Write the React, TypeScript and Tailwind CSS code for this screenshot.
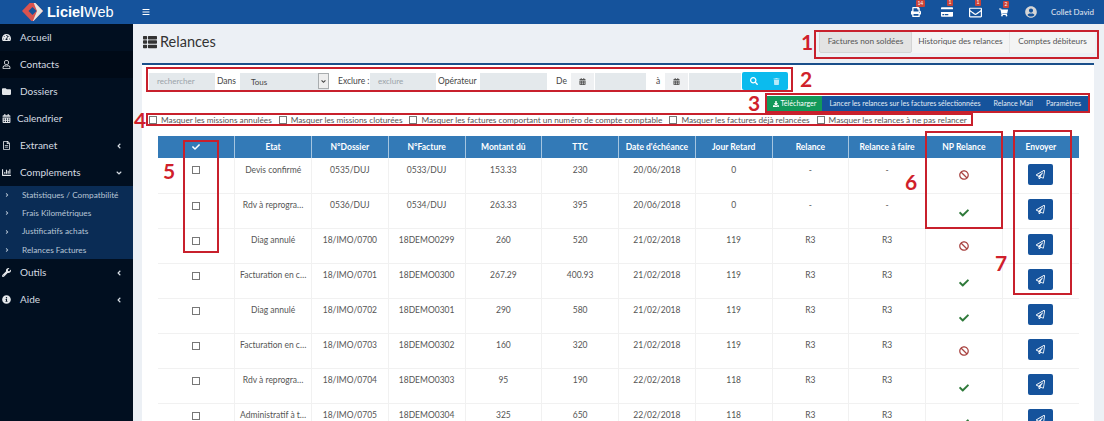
import React from "react";
import {
  FaAngleDown,
  FaAngleLeft,
  FaAngleRight,
  FaBan,
  FaBars,
  FaCalendarAlt,
  FaChartBar,
  FaCheck,
  FaCreditCard,
  FaDownload,
  FaFolder,
  FaInfoCircle,
  FaPrint,
  FaRegEnvelope,
  FaRegFileAlt,
  FaRegPaperPlane,
  FaRegUser,
  FaSearch,
  FaShoppingCart,
  FaTachometerAlt,
  FaThList,
  FaTrash,
  FaUserCircle,
  FaWrench,
} from "react-icons/fa";

const menuTop = [
  { icon: FaTachometerAlt, label: "Accueil" },
  { icon: FaRegUser, label: "Contacts", active: true },
  { icon: FaFolder, label: "Dossiers" },
  { icon: FaCalendarAlt, label: "Calendrier", tight: true },
  { icon: FaRegFileAlt, label: "Extranet", arrow: true },
];

const subMenu = ["Statistiques / Compatbilité", "Frais Kilométriques", "Justificatifs achats", "Relances Factures"];

const headers = ["Etat", "N°Dossier", "N°Facture", "Montant dû", "TTC", "Date d'échéance", "Jour Retard", "Relance", "Relance à faire", "NP Relance", "Envoyer"];

const rows = [
  { etat: "Devis confirmé", dossier: "0535/DUJ", facture: "0533/DUJ", montant: "153.33", ttc: "230", date: "20/06/2018", jour: "0", relance: "-", faire: "-", np: false },
  { etat: "Rdv à reprogra…", dossier: "0536/DUJ", facture: "0534/DUJ", montant: "263.33", ttc: "395", date: "20/06/2018", jour: "0", relance: "-", faire: "-", np: true },
  { etat: "Diag annulé", dossier: "18/IMO/0700", facture: "18DEMO0299", montant: "260", ttc: "520", date: "21/02/2018", jour: "119", relance: "R3", faire: "R3", np: false },
  { etat: "Facturation en c…", dossier: "18/IMO/0701", facture: "18DEMO0300", montant: "267.29", ttc: "400.93", date: "21/02/2018", jour: "119", relance: "R3", faire: "R3", np: true },
  { etat: "Diag annulé", dossier: "18/IMO/0702", facture: "18DEMO0301", montant: "290", ttc: "580", date: "21/02/2018", jour: "119", relance: "R3", faire: "R3", np: true },
  { etat: "Facturation en c…", dossier: "18/IMO/0703", facture: "18DEMO0302", montant: "160", ttc: "320", date: "21/02/2018", jour: "119", relance: "R3", faire: "R3", np: false },
  { etat: "Rdv à reprogra…", dossier: "18/IMO/0704", facture: "18DEMO0303", montant: "95", ttc: "190", date: "22/02/2018", jour: "118", relance: "R3", faire: "R3", np: true },
  { etat: "Administratif à t…", dossier: "18/IMO/0705", facture: "18DEMO0304", montant: "325", ttc: "650", date: "22/02/2018", jour: "118", relance: "R3", faire: "R3", np: true },
];

const filters = [
  "Masquer les missions annulées",
  "Masquer les missions cloturées",
  "Masquer les factures comportant un numéro de compte comptable",
  "Masquer les factures déjà relancées",
  "Masquer les relances à ne pas relancer",
];

const notes = [
  { n: "1", box: "left-[814px] top-[30px] w-[285px] h-[29px]", num: "left-[801px] top-[31px]" },
  { n: "2", box: "left-[146px] top-[67px] w-[647px] h-[25px]", num: "left-[800px] top-[68px]" },
  { n: "3", box: "left-[765px] top-[93px] w-[325px] h-[20px]", num: "left-[748px] top-[92px]" },
  { n: "4", box: "left-[146px] top-[113px] w-[827px] h-[13px]", num: "left-[134px] top-[109px]" },
  { n: "5", box: "left-[183px] top-[140px] w-[36px] h-[113px]", num: "left-[163px] top-[160px]" },
  { n: "6", box: "left-[925px] top-[131px] w-[78px] h-[98px]", num: "left-[905px] top-[171px]" },
  { n: "7", box: "left-[1013px] top-[130px] w-[59px] h-[165px]", num: "left-[995px] top-[252px]" },
];

const TopIcon = ({ icon: Icon, badge, size }: { icon: React.ElementType; badge: string; size: string }) => (
  <div className="relative flex w-[13px] justify-center">
    <Icon className={size} />
    <span className="absolute -top-[7px] left-[6px] rounded-[1px] bg-[#c9433a] px-[1.5px] text-[5px] leading-[7px] text-white">{badge}</span>
  </div>
);

const MenuItem = ({ icon: Icon, label, active, arrow, down, tight }: { icon: React.ElementType; label: string; active?: boolean; arrow?: boolean; down?: boolean; tight?: boolean }) => (
  <div className={`flex h-[27px] items-center pr-[10px] text-[10px] text-[#d5dbe2] ${active ? "bg-[#000a17]" : ""}`}>
    <div className="flex w-[20px] shrink-0 pl-[2px]">
      <Icon className="text-[9px] text-[#e4e7ea]" />
    </div>
    <span className={`flex-1 ${tight ? "ml-[-3px]" : ""}`}>{label}</span>
    {arrow && <FaAngleLeft className="text-[8px]" />}
    {down && <FaAngleDown className="text-[8px]" />}
  </div>
);

const Field = ({ width, placeholder }: { width: string; placeholder?: string }) => (
  <div className={`flex h-[17px] items-center bg-[#e4e9ec] pl-[8px] text-[8px] text-[#9aa3a9] ${width}`}>{placeholder}</div>
);

const CalendarField = ({ width }: { width: string }) => (
  <div className="flex h-[17px]">
    <div className="flex w-[23px] items-center justify-center bg-[#eef0f2]">
      <FaCalendarAlt className="text-[7px] text-[#555]" />
    </div>
    <div className={`ml-px bg-[#e4e9ec] ${width}`} />
  </div>
);

export default function App() {
  return (
    <div className="relative h-[421px] w-[1104px] overflow-hidden bg-[#ecf0f5] font-['Lato','Noto_Sans',sans-serif]">
      <header className="flex h-[24px] items-center bg-[#15539c] text-white">
        <div className="flex w-[133px] items-center pl-[22px]">
          <svg width="21" height="18" viewBox="0 0 21 18" className="mt-[-1px] shrink-0">
            <path d="M10.5 -3 L21 8 L10.5 19 L0 8 Z" fill="#d9534f" />
            <path d="M10.5 -3 L21 8 L10.5 19 L15 8 Z" fill="#e8e4e0" />
            <path d="M10.5 4 L14.5 8 L10.5 12 L6.5 8 Z" fill="#15539c" />
          </svg>
          <span className="ml-[4px] font-['Liberation_Sans',sans-serif] text-[14.5px] font-bold leading-none">
            Liciel<span className="font-normal">Web</span>
          </span>
        </div>
        <FaBars className="ml-[9px] text-[8px]" />
        <div className="ml-auto flex items-center gap-[15px] pr-[10px]">
          <div className="mr-[3px]">
            <TopIcon icon={FaPrint} badge="14" size="text-[10px]" />
          </div>
          <TopIcon icon={FaCreditCard} badge="1" size="text-[12px]" />
          <TopIcon icon={FaRegEnvelope} badge="1" size="text-[13px]" />
          <TopIcon icon={FaShoppingCart} badge="2" size="text-[9px]" />
          <FaUserCircle className="text-[12px] text-[#d6d6d6]" />
          <span className="ml-[-1px] text-[8px] text-[#e6ebf2]">Collet David</span>
        </div>
      </header>

      <div className="flex h-[397px]">
        <aside className="w-[133px] shrink-0 bg-[#010f20]">
          {menuTop.map((item) => (
            <MenuItem key={item.label} {...item} />
          ))}
          <MenuItem icon={FaChartBar} label="Complements" down />
          <div className="flex h-[73px] flex-col justify-center bg-[#0a2c55]">
            {subMenu.map((label) => (
              <div key={label} className="flex h-[18.5px] items-center text-[8.25px] text-[#b8c6d6]">
                <FaAngleRight className="ml-[4px] mr-[12px] text-[6px]" />
                {label}
              </div>
            ))}
          </div>
          <MenuItem icon={FaWrench} label="Outils" arrow />
          <MenuItem icon={FaInfoCircle} label="Aide" arrow />
        </aside>

        <main className="min-w-0 flex-1 pl-[9px] pr-[10px]">
          <div className="flex h-[39px] items-center pb-[4px]">
            <FaThList className="ml-px text-[14px] text-[#333]" />
            <h1 className="ml-[3px] text-[14.5px] text-[#333]">Relances</h1>
            <div className="ml-auto mr-[-1px] flex h-[22px] bg-[#f4f4f4] text-[8.25px] text-[#555]">
              <div className="flex w-[93px] items-center justify-center rounded-[2px] border border-[#d4d4d4] bg-[#e3e3e3]">Factures non soldées</div>
              <div className="flex w-[98px] items-center justify-center border-r border-[#e6e6e6]">Historique des relances</div>
              <div className="flex w-[85px] items-center justify-center">Comptes débiteurs</div>
            </div>
          </div>

          <section className="h-[358px] border-t-2 border-[#1a4f8a] bg-white pl-[7px] pr-[6px] pt-[7px] text-[8.5px] text-[#444]">
            <div className="flex items-center whitespace-nowrap">
              <Field width="w-[66px]" placeholder="rechercher" />
              <span className="ml-[2px] w-[23px]">Dans</span>
              <div className="flex h-[17px] w-[89px] items-center justify-between bg-[#e4e9ec] pl-[11px]">
                <span className="pt-[1px] text-[8px]">Tous</span>
                <div className="flex h-[16px] w-[11px] items-center justify-center border border-[#a9adaf] bg-[#eee]">
                  <FaAngleDown className="text-[7px]" />
                </div>
              </div>
              <span className="ml-[9px] w-[32px]">Exclure :</span>
              <Field width="w-[66px]" placeholder="exclure" />
              <span className="ml-[2px] w-[42px]">Opérateur</span>
              <Field width="w-[67px]" />
              <span className="ml-[9px] w-[15px]">De</span>
              <CalendarField width="w-[51px]" />
              <span className="ml-[10px] w-[9px]">à</span>
              <CalendarField width="w-[52px]" />
              <div className="ml-px flex h-[18px] w-[46px] items-center justify-around rounded-[2px] bg-[#0bbbee] text-white">
                <FaSearch className="text-[8px]" />
                <FaTrash className="text-[7px] opacity-70" />
              </div>
            </div>

            <div className="mt-[6px] flex justify-end">
              <div className="flex h-[16px] bg-[#15539c] text-[7.1px] text-[#e4ebf4]">
                <div className="flex w-[56px] items-center justify-center gap-[2px] bg-[#12995a] text-white">
                  <FaDownload className="text-[6px]" />
                  Télécharger
                </div>
                <span className="ml-[7px] flex items-center">Lancer les relances sur les factures sélectionnées</span>
                <span className="ml-[13px] flex items-center">Relance Mail</span>
                <span className="ml-[13px] mr-[7px] flex items-center">Paramètres</span>
              </div>
            </div>

            <div className="mt-[1px] flex h-[14px] items-center gap-[7px] text-[8.25px] text-[#555]">
              {filters.map((label) => (
                <label key={label} className="flex items-center gap-[4px] whitespace-nowrap">
                  <span className="h-[8px] w-[8px] border border-[#777] bg-white" />
                  {label}
                </label>
              ))}
            </div>

            <table className="ml-[9px] mt-[9px] w-[921px] table-fixed border-collapse text-center text-[8.5px] text-[#555]">
              <thead>
                <tr className="h-[22px] bg-[#337ab7] text-white">
                  <th className="border-r border-[#a5c5e0] font-bold">
                    <FaCheck className="mx-auto text-[8px]" />
                  </th>
                  {headers.map((h) => (
                    <th key={h} className="border-r border-[#a5c5e0] font-bold last:border-r-0">
                      {h}
                    </th>
                  ))}
                </tr>
              </thead>
              <tbody>
                {rows.map((r) => (
                  <tr key={r.facture} className="h-[35px] border-b border-[#f1f1f1]">
                    <td className="border-r border-[#f1f1f1] pb-[10px]">
                      <span className="mx-auto block h-[8px] w-[8px] border border-[#777]" />
                    </td>
                    {[r.etat, r.dossier, r.facture, r.montant, r.ttc, r.date, r.jour, r.relance, r.faire].map((v, i) => (
                      <td key={i} className="whitespace-nowrap border-r border-[#f1f1f1] pb-[10px]">
                        {v}
                      </td>
                    ))}
                    <td className="border-r border-[#f1f1f1]">
                      {r.np ? <FaCheck className="mx-auto mt-[4px] text-[10px] text-[#2f7a3a]" /> : <FaBan className="mx-auto text-[10px] text-[#a94442]" />}
                    </td>
                    <td className="pb-[2px]">
                      <div className="mx-auto flex h-[21px] w-[25px] items-center justify-center rounded-[2px] bg-[#15539c] text-white">
                        <FaRegPaperPlane className="text-[9px]" />
                      </div>
                    </td>
                  </tr>
                ))}
              </tbody>
            </table>
          </section>
        </main>
      </div>

      {notes.map((note) => (
        <React.Fragment key={note.n}>
          <div className={`pointer-events-none absolute border-2 border-[#c8202c] ${note.box}`} />
          <span className={`absolute text-[21px] font-bold leading-[22px] text-[#d01f2b] ${note.num}`}>{note.n}</span>
        </React.Fragment>
      ))}
    </div>
  );
}
